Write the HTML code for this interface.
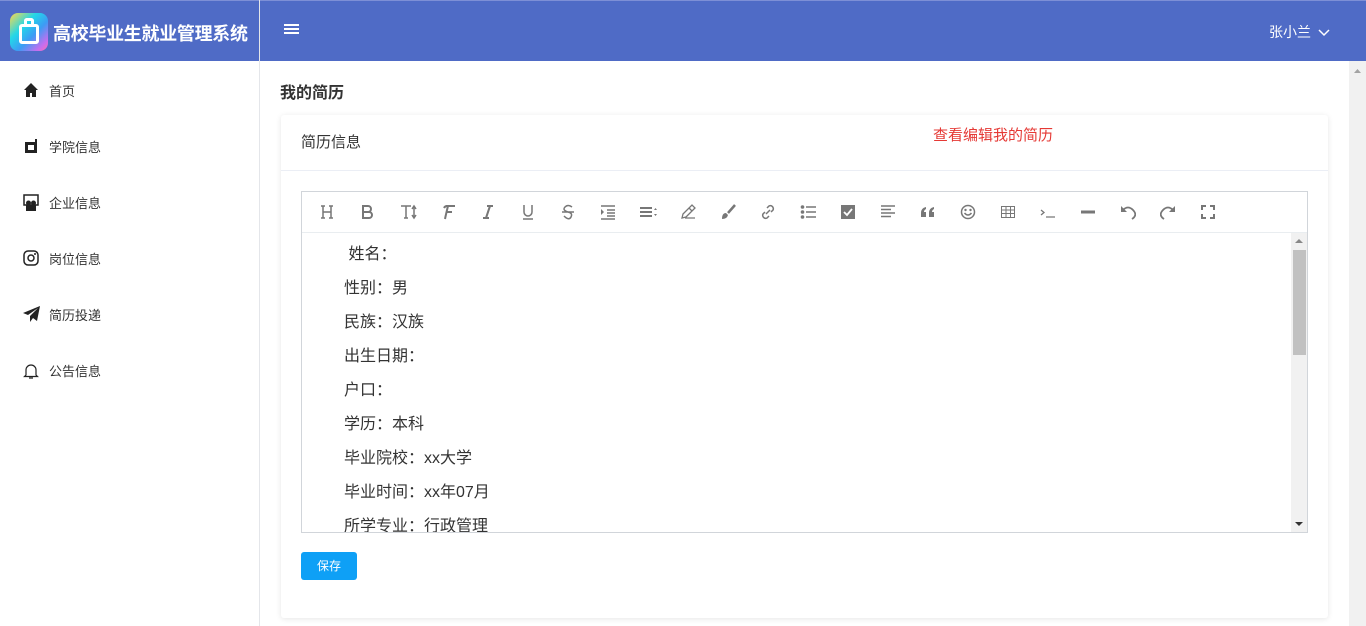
<!DOCTYPE html>
<html><head><meta charset="utf-8"><style>
*{margin:0;padding:0;box-sizing:border-box}
body{width:1366px;height:626px;overflow:hidden;background:#fff;font-family:"Liberation Sans","Noto Sans CJK SC",sans-serif;position:relative;color:#333}
.hdr{position:absolute;left:0;top:0;width:1366px;height:61px;background:#4f6bc6;border-top:1px solid #7d8fd6}
.logo{position:absolute;left:10px;top:12px;width:38px;height:38px;border-radius:8px;background:linear-gradient(135deg,#ffd84a 0%,#23d7e8 35%,#3c9cf5 60%,#c46ef0 85%,#ff6fb0 100%)}
.title{position:absolute;left:53px;top:19px;color:#fff;font-size:18px;font-weight:bold;letter-spacing:-0.3px}
.div{position:absolute;left:259px;top:0;width:1px;height:626px;background:#e4e6ea}
.ham{position:absolute;left:284px;top:23px;width:15px}
.ham i{display:block;height:2px;background:#fff;margin-bottom:2px}
.user{position:absolute;left:1269px;top:21px;color:#fff;font-size:14px}
.side{position:absolute;left:0;top:61px;width:259px}
.item{height:56px;position:relative;font-size:13px;color:#333}
.item span{position:absolute;left:49px;top:20px}
.item svg{position:absolute;left:23px;top:21px}
.pscroll{position:absolute;left:1349px;top:61px;width:17px;height:565px;background:#f1f1f1}
.h1{position:absolute;left:280px;top:79px;font-size:16px;font-weight:bold;color:#333}
.card{position:absolute;left:281px;top:115px;width:1047px;height:503px;background:#fff;border-radius:3px;box-shadow:0 1px 6px rgba(0,0,0,.1)}
.ch{height:56px;border-bottom:1px solid #ebeef5;font-size:15px;padding:16px 20px;position:relative}
.ch b{position:absolute;left:652px;top:9px;color:#e53935;font-weight:normal;font-size:15px}
.ed{position:absolute;left:20px;top:76px;width:1007px;height:342px;border:1px solid #d1d5da;overflow:hidden}
.tb{height:41px;border-bottom:1px solid #e9edf0;position:relative}
.tb svg{position:absolute;top:12px}
.txt{position:absolute;left:42px;top:46px;font-size:16px;color:#333;line-height:34px}
.sb{position:absolute;right:0;top:41px;width:16px;height:299px;background:#f1f1f1}
.th{position:absolute;right:1px;top:17px;width:13px;height:105px;background:#c1c1c1}
.btn{position:absolute;left:20px;top:437px;width:56px;height:28px;background:#0ea0f6;color:#fff;border-radius:3px;font-size:12px;text-align:center;line-height:28px}
</style></head><body>
<div class="hdr">
<div class="logo"><div style="position:absolute;left:9px;top:11px;width:20px;height:20px;border:3px solid #fff;border-radius:3px"></div><div style="position:absolute;left:14px;top:5px;width:10px;height:8px;border:3px solid #fff;border-bottom:none;border-radius:3px 3px 0 0"></div></div>
<div class="title">高校毕业生就业管理系统</div>
<div class="ham"><i></i><i></i><i></i></div>
<div class="user">张小兰 <svg width="12" height="8" viewBox="0 0 12 8" style="margin-left:3px"><path d="M1 1l5 5 5-5" stroke="#fff" stroke-width="1.5" fill="none"/></svg></div>
</div>
<div class="div"></div>
<div class="side">
<div class="item"><svg width="16" height="16" viewBox="0 0 16 16"><path d="M8 1L1 8h2v7h4v-4h2v4h4V8h2z" fill="#222"/></svg><span>首页</span></div>
<div class="item"><svg width="16" height="16" viewBox="0 0 16 16"><path d="M2 4h10V1h2v14H2z M5 7v5h6V7z" fill="#222" fill-rule="evenodd"/></svg><span>学院信息</span></div>
<div class="item"><svg width="16" height="18" viewBox="0 0 16 18"><path d="M1 1h14v10H1z" fill="none" stroke="#222" stroke-width="1.5"/><circle cx="5.5" cy="9" r="2.5" fill="#222"/><circle cx="10.5" cy="9" r="2.5" fill="#222"/><path d="M3 11h5v6H3zM8 11h5v6H8z" fill="#222"/></svg><span>企业信息</span></div>
<div class="item"><svg width="16" height="16" viewBox="0 0 16 16"><rect x="1" y="1" width="14" height="14" rx="4" fill="none" stroke="#222" stroke-width="1.5"/><circle cx="8" cy="8" r="3" fill="none" stroke="#222" stroke-width="1.5"/><circle cx="12" cy="4" r="1" fill="#222"/></svg><span>岗位信息</span></div>
<div class="item"><svg width="18" height="16" viewBox="0 0 18 16"><path d="M17 0L0 7l5 2 10-7-8 8v6l3-4 4 3z" fill="#222"/></svg><span>简历投递</span></div>
<div class="item"><svg width="16" height="18" viewBox="0 0 16 18"><path d="M3 13V8a5 5 0 0110 0v5l1.5 1.5h-13z M6 16h4" fill="none" stroke="#222" stroke-width="1.2"/></svg><span>公告信息</span></div>
</div>
<div class="pscroll"><svg width="17" height="12" viewBox="0 0 17 12" style="position:absolute;top:4px"><path d="M5 8l3.5-4 3.5 4z" fill="#a3a3a3"/></svg></div>
<div class="h1">我的简历</div>
<div class="card">
<div class="ch">简历信息<b>查看编辑我的简历</b></div>
<div class="ed">
<div class="tb" style="color:#777">
<svg style="left:18px" width="14" height="16" viewBox="0 0 14 16"><path d="M1 2h4M9 2h4M3 2v12M11 2v12M1 14h4M9 14h4M3 8h8" stroke="#777" stroke-width="1.5" fill="none"/></svg>
<svg style="left:59px" width="12" height="16" viewBox="0 0 12 16"><path d="M2 2h5a3 3 0 010 6H2zM2 8h6a3 3 0 010 6H2z" stroke="#777" stroke-width="2" fill="none"/></svg>
<svg style="left:98px" width="18" height="16" viewBox="0 0 18 16"><path d="M1 2h10M6 2v12M4 14h4M14 2v11M12 11l2 3 2-3M12 5l2-3 2 3" stroke="#777" stroke-width="1.5" fill="none"/></svg>
<svg style="left:140px" width="14" height="16" viewBox="0 0 14 16"><path d="M4 2h9M6 2Q4 10 3 15M4 8h6M2 4q1-2 3-2" stroke="#777" stroke-width="2" fill="none"/></svg>
<svg style="left:180px" width="12" height="16" viewBox="0 0 12 16"><path d="M5 2h6M1 14h6M8 2L4 14" stroke="#777" stroke-width="2" fill="none"/></svg>
<svg style="left:220px" width="12" height="16" viewBox="0 0 12 16"><path d="M2 1v7a4 4 0 008 0V1M1 15h10" stroke="#777" stroke-width="1.5" fill="none"/></svg>
<svg style="left:259px" width="14" height="16" viewBox="0 0 14 16"><path d="M11 3Q7 0 4 3t3 5q5 1 3 5t-7-1M1 8h12" stroke="#777" stroke-width="1.5" fill="none"/></svg>
<svg style="left:298px" width="16" height="16" viewBox="0 0 16 16"><path d="M1 2h14M7 6h8M7 9h8M7 12h8M1 15h14" stroke="#777" stroke-width="1.5"/><path d="M1 5l3 3-3 3z" fill="#777"/></svg>
<svg style="left:337px" width="18" height="16" viewBox="0 0 18 16"><path d="M1 4h12M1 8h12M1 12h12" stroke="#777" stroke-width="2"/><path d="M15 6l1.5-2 1.5 2zM15 10l1.5 2 1.5-2z" fill="#777"/></svg>
<svg style="left:378px" width="16" height="16" viewBox="0 0 16 16"><path d="M2 14l1-4 9-9 3 3-9 9zM9 4l3 3M5 14h10" stroke="#777" stroke-width="1.3" fill="none"/></svg>
<svg style="left:418px" width="16" height="16" viewBox="0 0 16 16"><path d="M15 1L8 9" stroke="#777" stroke-width="2.5"/><path d="M6 9q-4 0-4 6 5 0 6-4z" fill="#777"/></svg>
<svg style="left:458px" width="16" height="16" viewBox="0 0 16 16"><path d="M7 4l2-2a3 3 0 014 4l-2 2M9 12l-2 2a3 3 0 01-4-4l2-2M6 10l4-4" stroke="#777" stroke-width="1.5" fill="none"/></svg>
<svg style="left:498px" width="16" height="16" viewBox="0 0 16 16"><circle cx="2.5" cy="3" r="1.8" fill="#777"/><circle cx="2.5" cy="8" r="1.8" fill="#777"/><circle cx="2.5" cy="13" r="1.8" fill="#777"/><path d="M6 3h10M6 8h10M6 13h10" stroke="#777" stroke-width="1.6"/></svg>
<svg style="left:538px" width="16" height="16" viewBox="0 0 16 16"><rect x="1" y="1" width="14" height="14" fill="#777"/><path d="M4 8l3 3 5-6" stroke="#fff" stroke-width="1.8" fill="none"/></svg>
<svg style="left:578px" width="16" height="16" viewBox="0 0 16 16"><path d="M1 2h14M1 5.5h10M1 9h14M1 12.5h10" stroke="#777" stroke-width="1.6"/></svg>
<svg style="left:618px" width="16" height="16" viewBox="0 0 16 16"><path d="M1 13V9q0-5 5-6v2q-2 1-2 3h2v5zM9 13V9q0-5 5-6v2q-2 1-2 3h2v5z" fill="#777"/></svg>
<svg style="left:658px" width="16" height="16" viewBox="0 0 16 16"><circle cx="8" cy="8" r="6.5" stroke="#777" stroke-width="1.5" fill="none"/><circle cx="5.5" cy="6" r="1.2" fill="#777"/><circle cx="10.5" cy="6" r="1.2" fill="#777"/><path d="M4.5 9q3.5 4 7 0" stroke="#777" stroke-width="1.5" fill="none"/></svg>
<svg style="left:698px" width="16" height="16" viewBox="0 0 16 16"><path d="M1.5 2.5h13v11h-13zM1.5 6h13M1.5 9.5h13M6 2.5v11M10.5 2.5v11" stroke="#777" stroke-width="1" fill="none"/></svg>
<svg style="left:738px" width="16" height="16" viewBox="0 0 16 16"><path d="M1 6l3 2.5L1 11M6 13h9" stroke="#777" stroke-width="1.3" fill="none"/></svg>
<svg style="left:778px" width="16" height="16" viewBox="0 0 16 16"><path d="M1 8h14" stroke="#777" stroke-width="3"/></svg>
<svg style="left:818px" width="16" height="16" viewBox="0 0 16 16"><path d="M3 6q5-5 10 0t-1 9" stroke="#777" stroke-width="1.8" fill="none"/><path d="M1 2v6h6z" fill="#777"/></svg>
<svg style="left:858px" width="16" height="16" viewBox="0 0 16 16"><path d="M13 6Q8 1 3 6t1 9" stroke="#777" stroke-width="1.8" fill="none"/><path d="M15 2v6H9z" fill="#777"/></svg>
<svg style="left:898px" width="16" height="16" viewBox="0 0 16 16"><path d="M2 6V2h4M10 2h4v4M14 10v4h-4M6 14H2v-4" stroke="#777" stroke-width="2" fill="none"/></svg>
</div>
<div class="txt">&nbsp;姓名：<br>性别：男<br>民族：汉族<br>出生日期：<br>户口：<br>学历：本科<br>毕业院校：xx大学<br>毕业时间：xx年07月<br>所学专业：行政管理</div>
<div class="sb"><svg width="16" height="12" style="position:absolute;top:2px"><path d="M4 8l4-4 4 4z" fill="#888"/></svg><div class="th"></div><svg width="16" height="12" style="position:absolute;bottom:2px"><path d="M4 4l4 4 4-4z" fill="#333"/></svg></div>
</div>
<div class="btn">保存</div>
</div>
</body></html>
